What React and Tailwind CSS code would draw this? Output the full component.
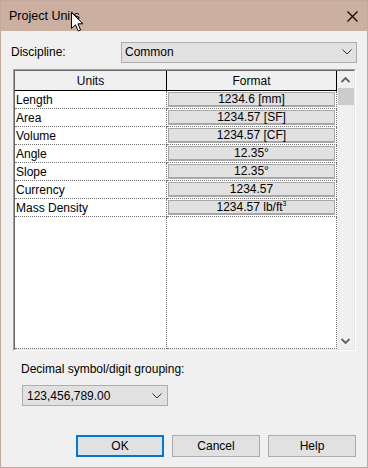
import React from 'react';

const ROWS = [
  ['Length', '1234.6 [mm]'],
  ['Area', '1234.57 [SF]'],
  ['Volume', '1234.57 [CF]'],
  ['Angle', '12.35°'],
  ['Slope', '12.35°'],
  ['Currency', '1234.57'],
  ['Mass Density', null],
];

function Chevron({ className }) {
  return (
    <svg width="10" height="6" viewBox="0 0 10 6" className={className}>
      <path d="M0.5 0.5 L5 5 L9.5 0.5" fill="none" stroke="#333" strokeWidth="1" />
    </svg>
  );
}

function Cursor() {
  return (
    <svg width="13" height="20" viewBox="0 0 13 20" className="absolute left-[70px] top-[11px]">
      <path
        d="M0.5 0.5 L0.5 16.5 L4.5 12.8 L7.2 19 L9.6 18 L7 11.8 L12 11.8 Z"
        fill="#fff"
        stroke="#000"
        strokeWidth="1"
        strokeLinejoin="miter"
      />
    </svg>
  );
}

function Button({ children, primary }) {
  return (
    <div
      className={`w-[88px] h-[22px] flex items-center justify-center bg-[#e1e1e1] text-[12px] text-black ${
        primary ? 'border-2 border-[#0078d7]' : 'border border-[#adadad]'
      }`}
    >
      {children}
    </div>
  );
}

export default function App() {
  return (
    <div className="relative w-[368px] h-[468px] bg-[#f0f0f0] border border-[#c4a899] font-['Liberation_Sans',Arial,sans-serif] text-[12px] text-black flex flex-col overflow-hidden">
      {/* Title bar */}
      <div className="h-[30px] bg-[#cbafa1] flex items-center justify-between pl-[8px] pr-[9px] shrink-0">
        <span className="text-[12.5px] text-black">Project Units</span>
        <svg width="11" height="11" viewBox="0 0 11 11">
          <path d="M0.5 0.5 L10.5 10.5 M10.5 0.5 L0.5 10.5" stroke="#000" strokeWidth="1.1" />
        </svg>
      </div>
      <Cursor />

      {/* Discipline */}
      <div className="flex items-center mt-[11px] h-[20px]">
        <span className="pl-[10px] w-[120px]">Discipline:</span>
        <div className="w-[236px] h-[21px] bg-[#e1e1e1] border border-[#adadad] flex items-center justify-between pl-[3px] pr-[4px]">
          <span>Common</span>
          <Chevron />
        </div>
      </div>

      {/* Table frame */}
      <div className="ml-[12px] mt-[7px] w-[343px] h-[282px] border border-t-[#a0a0a0] border-l-[#a0a0a0] border-r-[#ffffff] border-b-[#ffffff]">
        <div className="w-full h-full border border-t-[#696969] border-l-[#696969] border-r-[#e3e3e3] border-b-[#e3e3e3] flex">
          <div className="w-[322px] flex flex-col bg-white">
            {/* Header */}
            <div className="flex h-[20px] bg-[#f0f0f0] shrink-0">
              <div className="w-[152px] border-r border-b border-black flex items-center justify-center">Units</div>
              <div className="w-[170px] border-r border-b border-black flex items-center justify-center">Format</div>
            </div>
            {ROWS.map(([name, fmt]) => (
              <div key={name} className="flex h-[18px] shrink-0">
                <div className="w-[152px] border-r border-b border-dotted border-[#707070] pl-[1px] flex items-center leading-none">
                  {name}
                </div>
                <div className="w-[170px] border-r border-b border-dotted border-[#707070] pl-[1px] pr-[1px] pt-[1px] pb-[1px]">
                  <div className="h-full bg-[#e1e1e1] border border-[#a7a7a7] border-b-2 flex items-center justify-center leading-none">
                    {fmt ?? (
                      <span>
                        1234.57 lb/ft<span className="text-[7px] align-top relative -top-[1px]">3</span>
                      </span>
                    )}
                  </div>
                </div>
              </div>
            ))}
            <div className="flex flex-1">
              <div className="w-[152px] border-r border-b border-dotted border-[#707070]" />
              <div className="w-[170px] border-r border-b border-dotted border-[#707070]" />
            </div>
          </div>
          {/* Scrollbar */}
          <div className="w-[17px] bg-[#f0f0f0] flex flex-col items-center">
            <div className="h-[17px] w-full flex items-center justify-center">
              <svg width="9" height="6" viewBox="0 0 9 6">
                <path d="M0.5 5 L4.5 1 L8.5 5" fill="none" stroke="#606060" strokeWidth="1.8" />
              </svg>
            </div>
            <div className="w-[16px] h-[17px] bg-[#cdcdcd] ml-[1px]" />
            <div className="flex-1" />
            <div className="h-[17px] w-full flex items-center justify-center">
              <svg width="9" height="6" viewBox="0 0 9 6">
                <path d="M0.5 1 L4.5 5 L8.5 1" fill="none" stroke="#606060" strokeWidth="1.8" />
              </svg>
            </div>
          </div>
        </div>
      </div>

      {/* Decimal grouping */}
      <div className="ml-[20px] mt-[12px] leading-none">Decimal symbol/digit grouping:</div>
      <div className="ml-[21px] mt-[10px] w-[146px] h-[21px] bg-[#e1e1e1] border border-[#adadad] flex items-center justify-between pl-[4px] pr-[5px]">
        <span>123,456,789.00</span>
        <Chevron />
      </div>

      {/* Buttons */}
      <div className="flex gap-[8px] ml-[75px] mt-[29px]">
        <Button primary>OK</Button>
        <Button>Cancel</Button>
        <Button>Help</Button>
      </div>
    </div>
  );
}
